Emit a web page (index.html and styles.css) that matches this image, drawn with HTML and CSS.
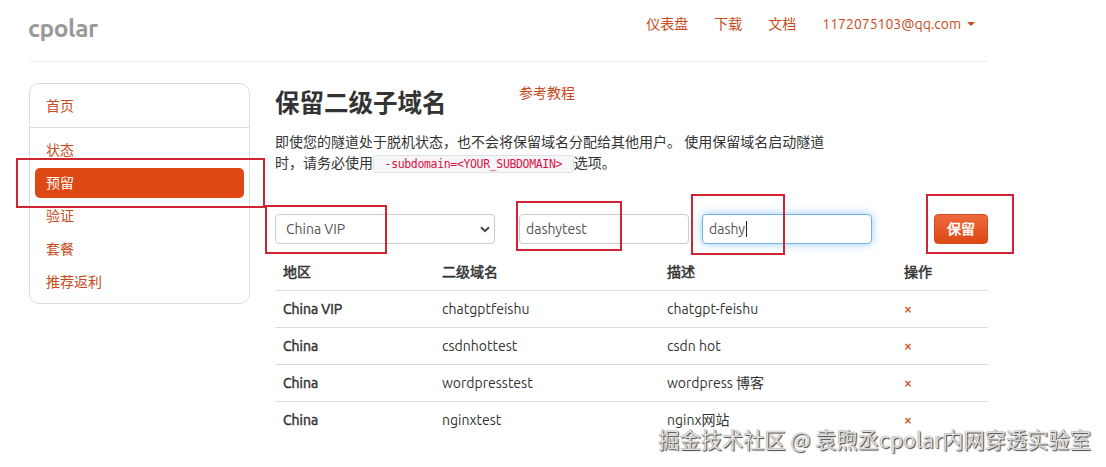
FILE: index.html
```html
<!DOCTYPE html>
<html lang="zh-CN">
<head>
  <meta charset="utf-8">
  <title>cpolar - 保留二级子域名</title>
  <link rel="stylesheet" href="styles.css">
</head>
<body>
  <div class="container">
    <div class="masthead">
      <h3 class="logo">cpolar</h3>
      <ul class="nav">
        <li><a href="#">仪表盘</a></li>
        <li><a href="#">下载</a></li>
        <li><a href="#">文档</a></li>
        <li><a href="#">1172075103@qq.com<b class="arrow"></b></a></li>
      </ul>
    </div>

    <div class="row">
      <div class="sidebar">
        <a class="home" href="#">首页</a>
        <ul class="menu">
          <li><a href="#">状态</a></li>
          <li class="active"><a href="#">预留</a></li>
          <li><a href="#">验证</a></li>
          <li><a href="#">套餐</a></li>
          <li><a href="#">推荐返利</a></li>
        </ul>
      </div>

      <div class="content">
        <div class="heading">
          <h2>保留二级子域名</h2>
          <a href="#">参考教程</a>
        </div>
        <p class="intro">即使您的隧道处于脱机状态，也不会将保留域名分配给其他用户。 使用保留域名启动隧道时，请务必使用<code>&nbsp;-subdomain=&lt;YOUR_SUBDOMAIN&gt;&nbsp;</code>选项。</p>

        <form class="reserve">
          <div class="select">
            <select>
              <option>China VIP</option>
              <option>China</option>
            </select>
            <svg width="10" height="7" viewBox="0 0 10 7"><path d="M1 1.2L5 5.2L9 1.2" fill="none" stroke="#444" stroke-width="2"/></svg>
          </div>
          <input type="text" class="name" value="dashytest">
          <div class="desc">
            <input type="text" class="focused" value="dashy">
            <i class="cursor"></i>
          </div>
          <button type="button">保留</button>
        </form>

        <table>
          <thead>
            <tr><th class="region">地区</th><th class="domain">二级域名</th><th class="about">描述</th><th>操作</th></tr>
          </thead>
          <tbody>
            <tr><th>China VIP</th><td>chatgptfeishu</td><td>chatgpt-feishu</td><td><a href="#">×</a></td></tr>
            <tr><th>China</th><td>csdnhottest</td><td>csdn hot</td><td><a href="#">×</a></td></tr>
            <tr><th>China</th><td>wordpresstest</td><td>wordpress 博客</td><td><a href="#">×</a></td></tr>
            <tr><th>China</th><td>nginxtest</td><td>nginx网站</td><td><a href="#">×</a></td></tr>
          </tbody>
        </table>
      </div>
    </div>
  </div>

  <!-- highlighted steps -->
  <div class="mark mark-menu"></div>
  <div class="mark mark-region"></div>
  <div class="mark mark-name"></div>
  <div class="mark mark-desc"></div>
  <div class="mark mark-save"></div>

  <div class="watermark">掘金技术社区 @ 袁煦丞cpolar内网穿透实验室</div>
</body>
</html>
```
FILE: styles.css
```css
* {
  box-sizing: border-box;
}

body {
  position: relative;
  margin: 0;
  height: 467px;
  overflow: hidden;
  background: #fff;
  color: #333;
  font: 14px/20px Ubuntu, "Noto Sans", "Noto Sans CJK SC", sans-serif;
}

a {
  color: #c94a1c;
  text-decoration: none;
}

ul {
  list-style: none;
  margin: 0;
  padding: 0;
}

.container {
  width: 959px;
  margin-left: 29px;
}

.masthead {
  display: flex;
  justify-content: space-between;
  height: 62px;
  border-bottom: 1px solid #eee;
}

.logo {
  margin: 8px 0 0 -1px;
  color: #999;
  font-size: 24.5px;
  line-height: 40px;
  letter-spacing: -0.5px;
}

.nav {
  display: flex;
  gap: 26px;
  padding: 14px 13px 0 0;
}

.nav a {
  display: flex;
  align-items: center;
}

.arrow {
  margin-left: 6px;
  border-top: 4px solid #c94a1c;
  border-left: 4px solid transparent;
  border-right: 4px solid transparent;
}

.row {
  display: flex;
  gap: 25px;
  margin-top: 21px;
}

.sidebar {
  width: 221px;
  height: 221px;
  border: 1px solid #ddd;
  border-radius: 10px;
}

.home {
  display: block;
  height: 44px;
  padding: 12px 16px;
  border-bottom: 1px solid #ddd;
}

.menu {
  padding: 7px 5px;
}

.menu li {
  margin-bottom: 3px;
}

.menu a {
  display: block;
  padding: 5px 11px;
  border-radius: 5px;
}

.menu .active a {
  background: #dd4814;
  color: #fff;
}

.content {
  width: 713px;
}

.heading {
  display: flex;
  height: 49px;
}

h2 {
  width: 244px;
  margin: 0;
  font-size: 24.5px;
  line-height: 41px;
}

.intro {
  width: 560px;
  margin: 0;
  line-height: 21px;
}

code {
  padding: 1px 4px;
  border: 1px solid #e1e1e8;
  border-radius: 3px;
  background: #f7f7f9;
  color: #d14;
  font: 11.5px "DejaVu Sans Mono", monospace;
  letter-spacing: -0.35px;
  white-space: nowrap;
}

.reserve {
  display: flex;
  margin-top: 40px;
}

input, select {
  width: 100%;
  height: 30px;
  padding: 4px 6px;
  border: 1px solid #ccc;
  border-radius: 4px;
  background: #fff;
  color: #555;
  font: inherit;
  outline: none;
}

select {
  padding-left: 10px;
  appearance: none;
}

.select {
  position: relative;
  width: 220px;
}

.select svg {
  position: absolute;
  top: 12px;
  right: 5px;
}

.name {
  width: 170px;
  margin-left: 24px;
}

.desc {
  position: relative;
  width: 170px;
  margin-left: 13px;
}

.focused {
  border-color: #74b2e2;
  box-shadow: 0 0 8px rgba(82, 168, 236, 0.6);
}

.cursor {
  position: absolute;
  top: 7px;
  left: 44px;
  width: 1px;
  height: 16px;
  background: #222;
}

button {
  width: 54px;
  height: 30px;
  margin-left: auto;
  padding: 0;
  border: 1px solid #cf4a1e;
  border-radius: 4px;
  background: linear-gradient(#ee6a3c, #dd4814);
  color: #fff;
  font: inherit;
  -webkit-text-stroke: 0.5px #fff;
}

table {
  width: 100%;
  margin-top: 9px;
  border-collapse: collapse;
  table-layout: fixed;
}

th, td {
  height: 37px;
  padding: 8px;
  border-top: 1px solid #ddd;
  text-align: left;
}

th {
  font-weight: normal;
  -webkit-text-stroke: 0.5px #333;
}

thead th {
  padding-top: 9px;
  padding-bottom: 7px;
  border-top: 0;
}

td a {
  -webkit-text-stroke: 0.4px #dd4814;
}

.region {
  width: 159px;
}

.domain {
  width: 225px;
}

.about {
  width: 237px;
}

.mark {
  position: absolute;
  border: 2px solid #cf2433;
}

.mark-menu {
  top: 158px;
  left: 16px;
  width: 249px;
  height: 50px;
}

.mark-region {
  top: 205px;
  left: 265px;
  width: 122px;
  height: 49px;
}

.mark-name {
  top: 201px;
  left: 516px;
  width: 106px;
  height: 50px;
}

.mark-desc {
  top: 194px;
  left: 691px;
  width: 94px;
  height: 61px;
}

.mark-save {
  top: 194px;
  left: 926px;
  width: 88px;
  height: 60px;
}

.watermark {
  position: absolute;
  top: 424px;
  right: 15px;
  color: #ddd;
  font: 21.25px/30px "Noto Sans CJK SC", sans-serif;
  text-shadow: 1px 1px 1px #444, 0 0 1px #888;
  white-space: nowrap;
}
```
